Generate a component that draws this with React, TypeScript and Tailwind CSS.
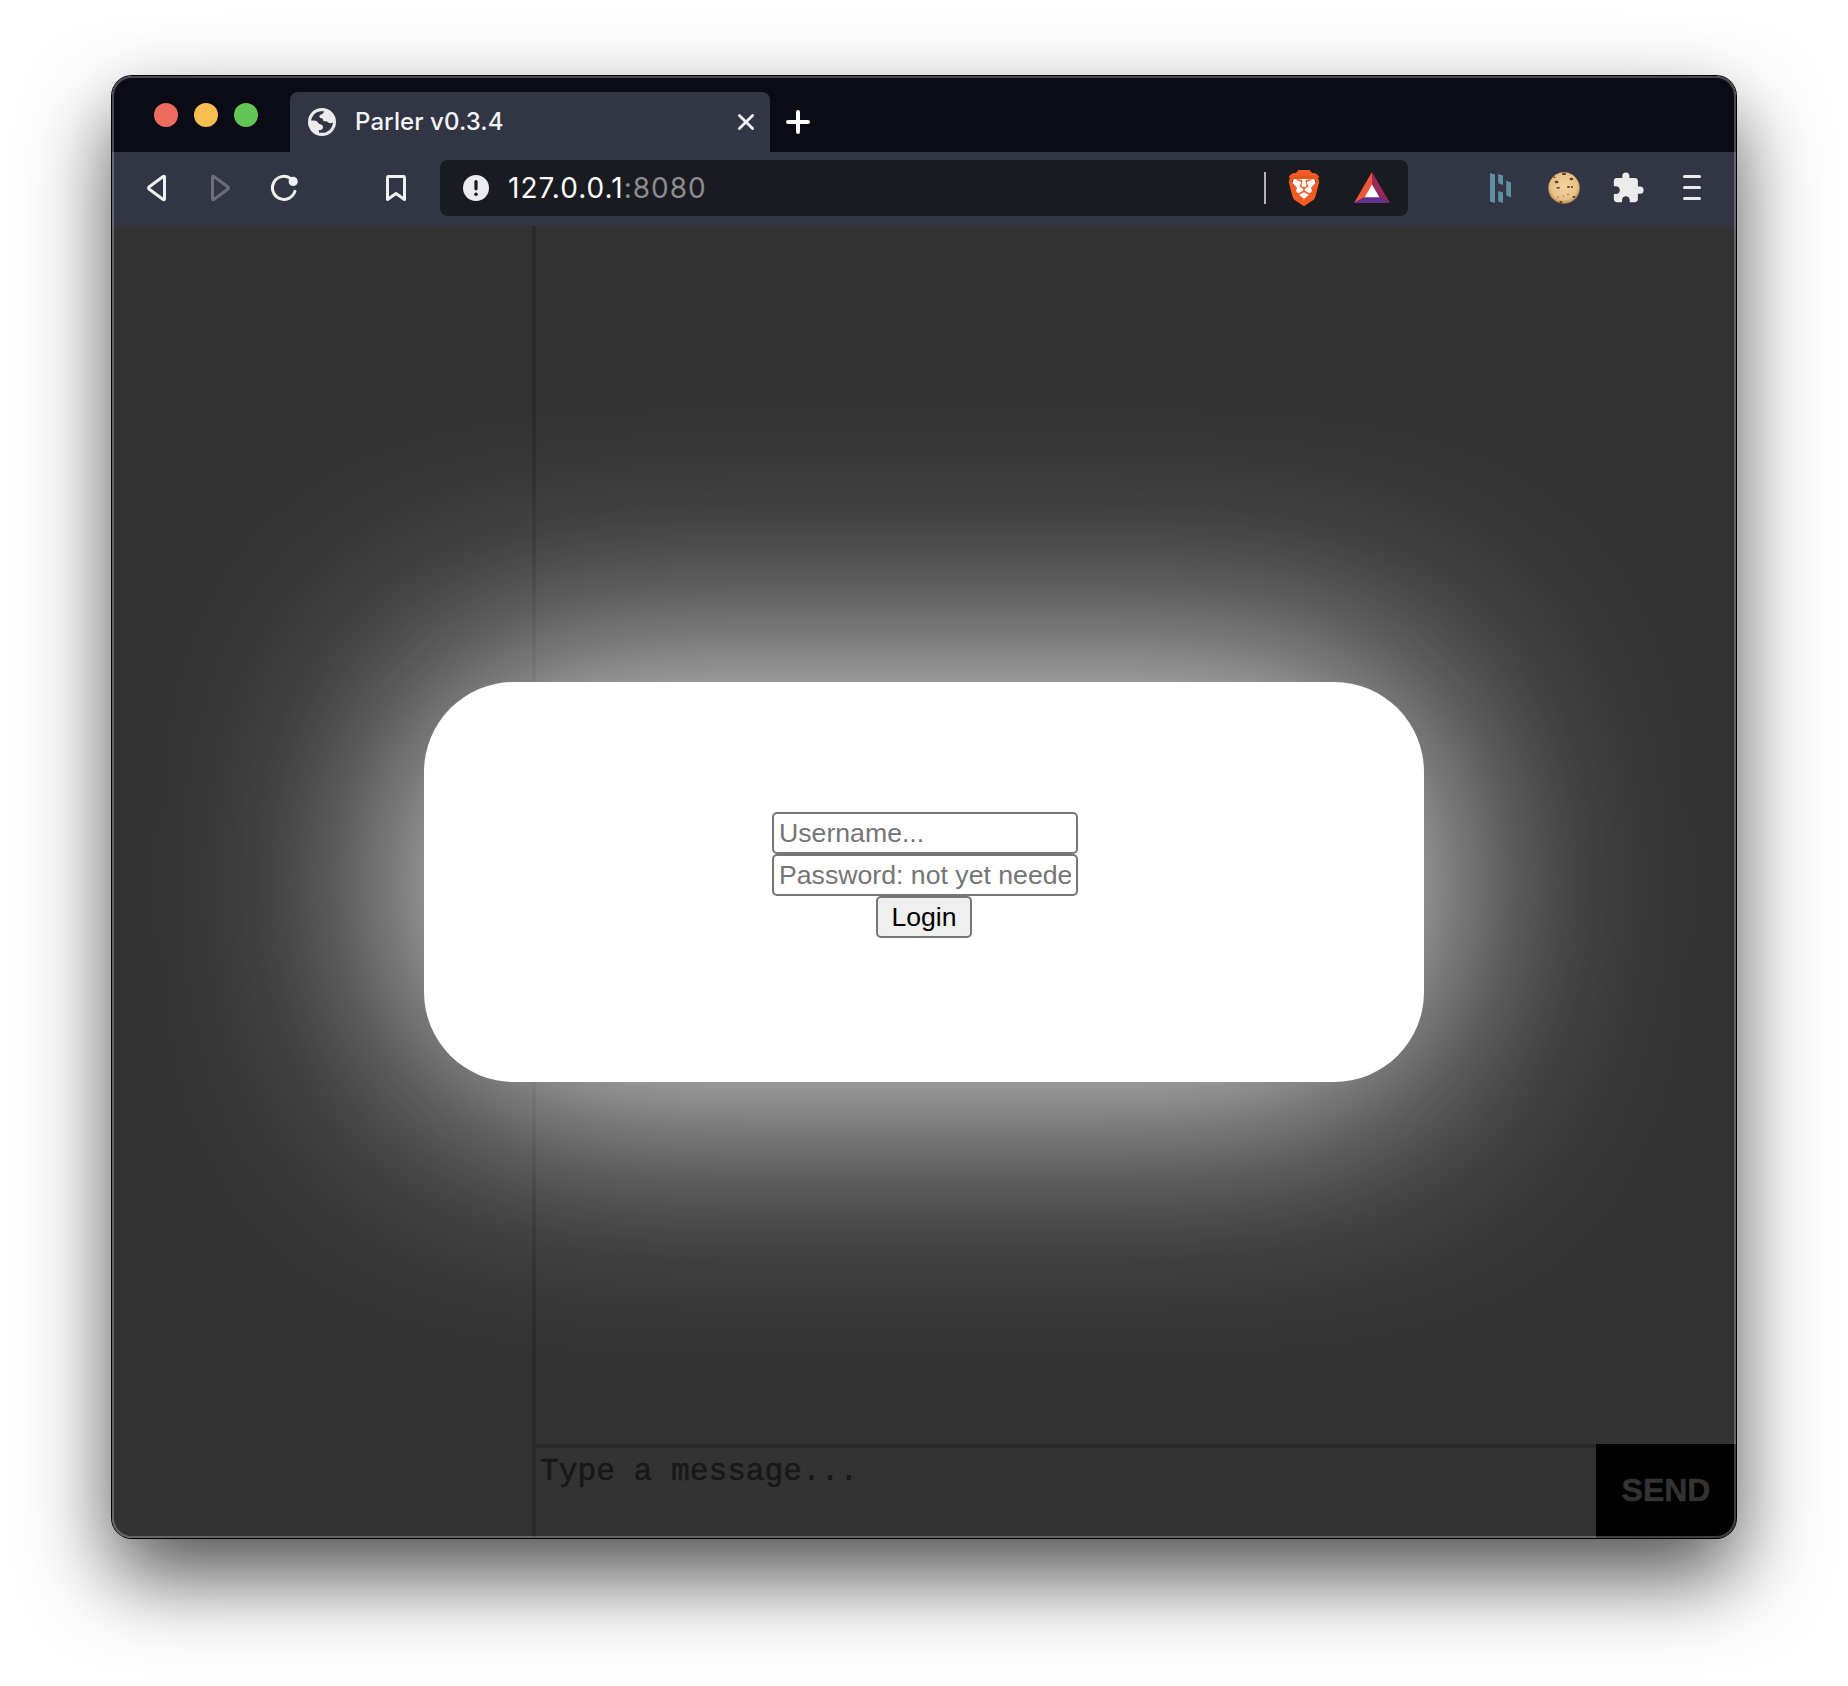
import { SiBrave } from "react-icons/si";
import { MdExtension } from "react-icons/md";

function Globe() {
  return (
    <svg className="size-7" viewBox="0 0 28 28">
      <circle cx="14" cy="14" r="14" fill="#ececee" />
      <path
        d="M3.1 12.6C3.8 7.6 7.6 3.9 12.2 3.2H16.2C15.8 4.6 15 5.8 13.6 6.2C12 6.6 11.2 7.4 11.4 8.8C11.6 10.2 13 10 14.2 10.4C15.6 10.9 14.8 12.8 16 13.2C17.2 13.6 18.4 12.8 19.4 13.8C20.6 15 21.4 15.8 24.9 14.6C24.7 19.4 21.2 23.8 16.6 24.8H10.9V21.9C13 22 14.8 21.4 15 19.4C15.2 17.2 13.4 16.4 11.6 15.9C9.8 15.4 10 13.8 8.4 13.1C7.2 12.7 5 12.8 3.1 12.6Z"
        fill="#323544"
      />
    </svg>
  );
}

function TitleBar() {
  return (
    <div className="flex h-[76px] items-end bg-[#0b0b15]">
      <div className="flex w-[178px] shrink-0 gap-4 self-start pt-[27px] pl-[42px]">
        <span className="size-6 rounded-full bg-[#ed6a5f]" />
        <span className="size-6 rounded-full bg-[#f6be50]" />
        <span className="size-6 rounded-full bg-[#62c655]" />
      </div>
      <div className="flex h-[60px] w-[480px] items-center rounded-t-lg bg-[#323544] pr-4 pl-[18px]">
        <Globe />
        <span className="ml-[19px] grow text-[24px] font-medium whitespace-nowrap tracking-[0.1px] text-[#f4f4f6]">Parler v0.3.4</span>
        <svg className="size-4" viewBox="0 0 16 16" stroke="#f4f4f2" strokeWidth="2.8" strokeLinecap="round">
          <path d="M1.4 1.4L14.6 14.6M14.6 1.4L1.4 14.6" />
        </svg>
      </div>
      <svg className="mb-[18px] ml-4 size-6" viewBox="0 0 24 24" stroke="#fff" strokeWidth="4" strokeLinecap="round">
        <path d="M12 2V22M2 12H22" />
      </svg>
    </div>
  );
}

function AddressBar() {
  return (
    <div className="flex h-14 w-[968px] items-center rounded-lg bg-[#1a1b20] pl-[23px]">
      <svg className="size-[26px]" viewBox="0 0 26 26">
        <circle cx="13" cy="13" r="13" fill="#ececee" />
        <path d="M13 6.6V13.8" stroke="#1a1b20" strokeWidth="3.2" strokeLinecap="round" />
        <circle cx="13" cy="19.2" r="1.8" fill="#1a1b20" />
      </svg>
      <span className="ml-[19px] text-[28px] leading-none tracking-[1.02px] whitespace-nowrap text-[#8b8c90]">
        <span className="text-white">127.0.0.1</span>:8080
      </span>
      <div className="ml-auto flex items-center">
        <span className="h-8 w-0.5 bg-[#b4b4b8]" />
        <span className="relative ml-[22px] flex h-9 w-8 items-center justify-center">
          <svg className="absolute size-full" viewBox="0 0 32 36">
            <path d="M6 8H26L28 14L22 27L16 31L10 27L4 14Z" fill="#fff" />
            <path d="M5 3H27V9H5Z" fill="#e0561f" />
          </svg>
          <SiBrave className="relative size-9 shrink-0 text-[#f15a22]" />
        </span>
        <svg className="mr-[18px] ml-[34px] h-8 w-9" viewBox="0 0 36 32">
          <path d="M18 0V13L11 25L0 31Z" fill="#f0563a" />
          <path d="M18 0V13L25 25L36 31Z" fill="#99285f" />
          <path d="M0 31L11 25H25L36 31Z" fill="#66308f" />
          <path d="M18 12.4L25.4 25.3H10.6Z" fill="#fff" />
        </svg>
      </div>
    </div>
  );
}

function Cookie() {
  return (
    <svg className="size-8" viewBox="0 0 32 32">
      <defs>
        <radialGradient id="dough" cx="0.5" cy="0.45" r="0.56">
          <stop offset="0" stopColor="#f2d5a2" />
          <stop offset="0.75" stopColor="#e6c185" />
          <stop offset="1" stopColor="#b98a4c" />
        </radialGradient>
      </defs>
      <circle cx="16" cy="16" r="15.7" fill="url(#dough)" />
      <g fill="#6b3a25">
        <ellipse cx="16" cy="1.9" rx="2" ry="1.2" />
        <ellipse cx="8.6" cy="10" rx="1.9" ry="1.3" />
        <ellipse cx="23.4" cy="7" rx="1.8" ry="1.3" />
        <ellipse cx="6.5" cy="5.2" rx="1.2" ry="0.8" />
        <ellipse cx="10.2" cy="15.8" rx="1.8" ry="0.9" />
        <ellipse cx="20.5" cy="15" rx="1.5" ry="1.1" />
        <ellipse cx="24" cy="15" rx="1.1" ry="1.1" />
        <ellipse cx="26" cy="25" rx="1.5" ry="1.1" />
        <ellipse cx="13" cy="30" rx="1.6" ry="0.9" />
        <circle cx="10" cy="25" r="0.6" />
        <circle cx="15.4" cy="24" r="0.5" />
        <circle cx="20" cy="22.4" r="0.6" />
      </g>
    </svg>
  );
}

function Toolbar() {
  return (
    <div className="flex h-[74px] items-center bg-[#323544] pb-0.5">
      <svg className="ml-[34px] h-7 w-[22px]" viewBox="0 0 22 28" fill="none" stroke="#f0f0f0" strokeWidth="3" strokeLinejoin="round">
        <path d="M18.5 2.9V25.1C18.5 25.8 17.8 25.9 17.2 25.5L3.3 15.3C2.4 14.6 2.4 13.4 3.3 12.7L17.2 2.5C17.8 2.1 18.5 2.2 18.5 2.9Z" />
      </svg>
      <svg className="ml-[42px] h-7 w-[22px]" viewBox="0 0 22 28" fill="none" stroke="#6b6d77" strokeWidth="3" strokeLinejoin="round">
        <path d="M2.5 2.9V25.1C2.5 25.8 3.2 25.9 3.8 25.5L17.7 15.3C18.6 14.6 18.6 13.4 17.7 12.7L3.8 2.5C3.2 2.1 2.5 2.2 2.5 2.9Z" />
      </svg>
      <svg className="ml-[38px] size-7" viewBox="0 0 28 28" fill="none">
        <path d="M20.5 4.4A11.5 11.5 0 1 0 24.9 17.4" stroke="#f0f0f0" strokeWidth="3" strokeLinecap="round" />
        <circle cx="23.2" cy="7.4" r="4.6" fill="#f0f0f0" />
      </svg>
      <svg className="ml-[87px] h-7 w-[22px]" viewBox="0 0 22 28" fill="none" stroke="#f0f0f0" strokeWidth="3" strokeLinejoin="round">
        <path d="M3.4 2.5H18.6Q19.5 2.5 19.5 3.4V25.4L11 19.6L2.5 25.4V3.4Q2.5 2.5 3.4 2.5Z" />
      </svg>
      <div className="ml-[33px]">
        <AddressBar />
      </div>
      <svg className="ml-[82px] h-[30px] w-[22px]" viewBox="0 0 22 30" fill="#5f8fa3">
        <path d="M0 0L5 1.4V30L0 28.6ZM8.2 1L13 2.4V12L8.2 10.2ZM8.2 18L13 19.6V30L8.2 28.4ZM16.2 7.6L21 9.4V24.6L16.2 22.6Z" />
      </svg>
      <div className="ml-9">
        <Cookie />
      </div>
      <MdExtension className="ml-[31px] size-[34px] text-[#ececec]" />
      <div className="mb-px ml-[38px] flex w-[18px] flex-col gap-2">
        <span className="h-[3px] rounded-full bg-[#ececec]" />
        <span className="h-[3px] rounded-full bg-[#ececec]" />
        <span className="h-[3px] rounded-full bg-[#ececec]" />
      </div>
    </div>
  );
}

function Chat() {
  return (
    <div className="flex h-full bg-[#333]">
      <aside className="w-[424px] shrink-0 border-r-4 border-[#2a2a2a]" />
      <main className="flex grow flex-col">
        <div className="grow" />
        <div className="flex h-[94px]">
          <div className="grow border-t-4 border-[#2a2a2a] pt-[7px] pl-1 font-['Courier_New','Liberation_Mono',monospace] text-[31.2px] leading-[34px] text-[#181818] [-webkit-text-stroke:0.5px_#181818]">
            Type a message...
          </div>
          <div className="flex w-[140px] items-center justify-center bg-black pb-0.5 text-[32px] font-bold text-[#333] [-webkit-text-stroke:0.5px_#333]">
            SEND
          </div>
        </div>
      </main>
    </div>
  );
}

function Login() {
  return (
    <div className="absolute inset-0 flex items-center justify-center">
      <div className="absolute h-[400px] w-[1000px] rounded-[90px] bg-white blur-[125px]" />
      <form className="relative flex h-[400px] w-[1000px] flex-col items-center rounded-[90px] bg-white pt-[130px] text-[26.67px] leading-[30px]">
        <input
          className="ml-0.5 h-[42px] w-[306px] rounded-[5px] border-2 border-[#767676] bg-white px-[5px] py-0 placeholder:text-[#757575]"
          placeholder="Username..."
        />
        <input
          className="ml-0.5 h-[42px] w-[306px] rounded-[5px] border-2 border-[#767676] bg-white px-[5px] py-0 placeholder:text-[#757575]"
          placeholder="Password: not yet needed"
        />
        <button type="button" className="h-[42px] w-24 rounded-[5px] border-2 border-[#767676] bg-[#efefef] text-black">
          Login
        </button>
      </form>
    </div>
  );
}

export default function App() {
  return (
    <div className="h-[1686px] w-[1848px] overflow-hidden bg-white px-28 pt-[76px] font-['Inter',sans-serif]">
      <div className="rounded-[20px] shadow-[0_0_0_1px_#000,0_38px_84px_0_rgba(0,0,0,0.69)]">
        <div className="relative h-[1462px] overflow-hidden rounded-[20px]">
          <TitleBar />
          <Toolbar />
          <div className="relative h-[1312px] overflow-hidden font-['Liberation_Sans',Arial,sans-serif]">
            <Chat />
            <Login />
          </div>
          <div className="pointer-events-none absolute inset-0 rounded-[20px] border-2 border-white/25" />
        </div>
      </div>
    </div>
  );
}
